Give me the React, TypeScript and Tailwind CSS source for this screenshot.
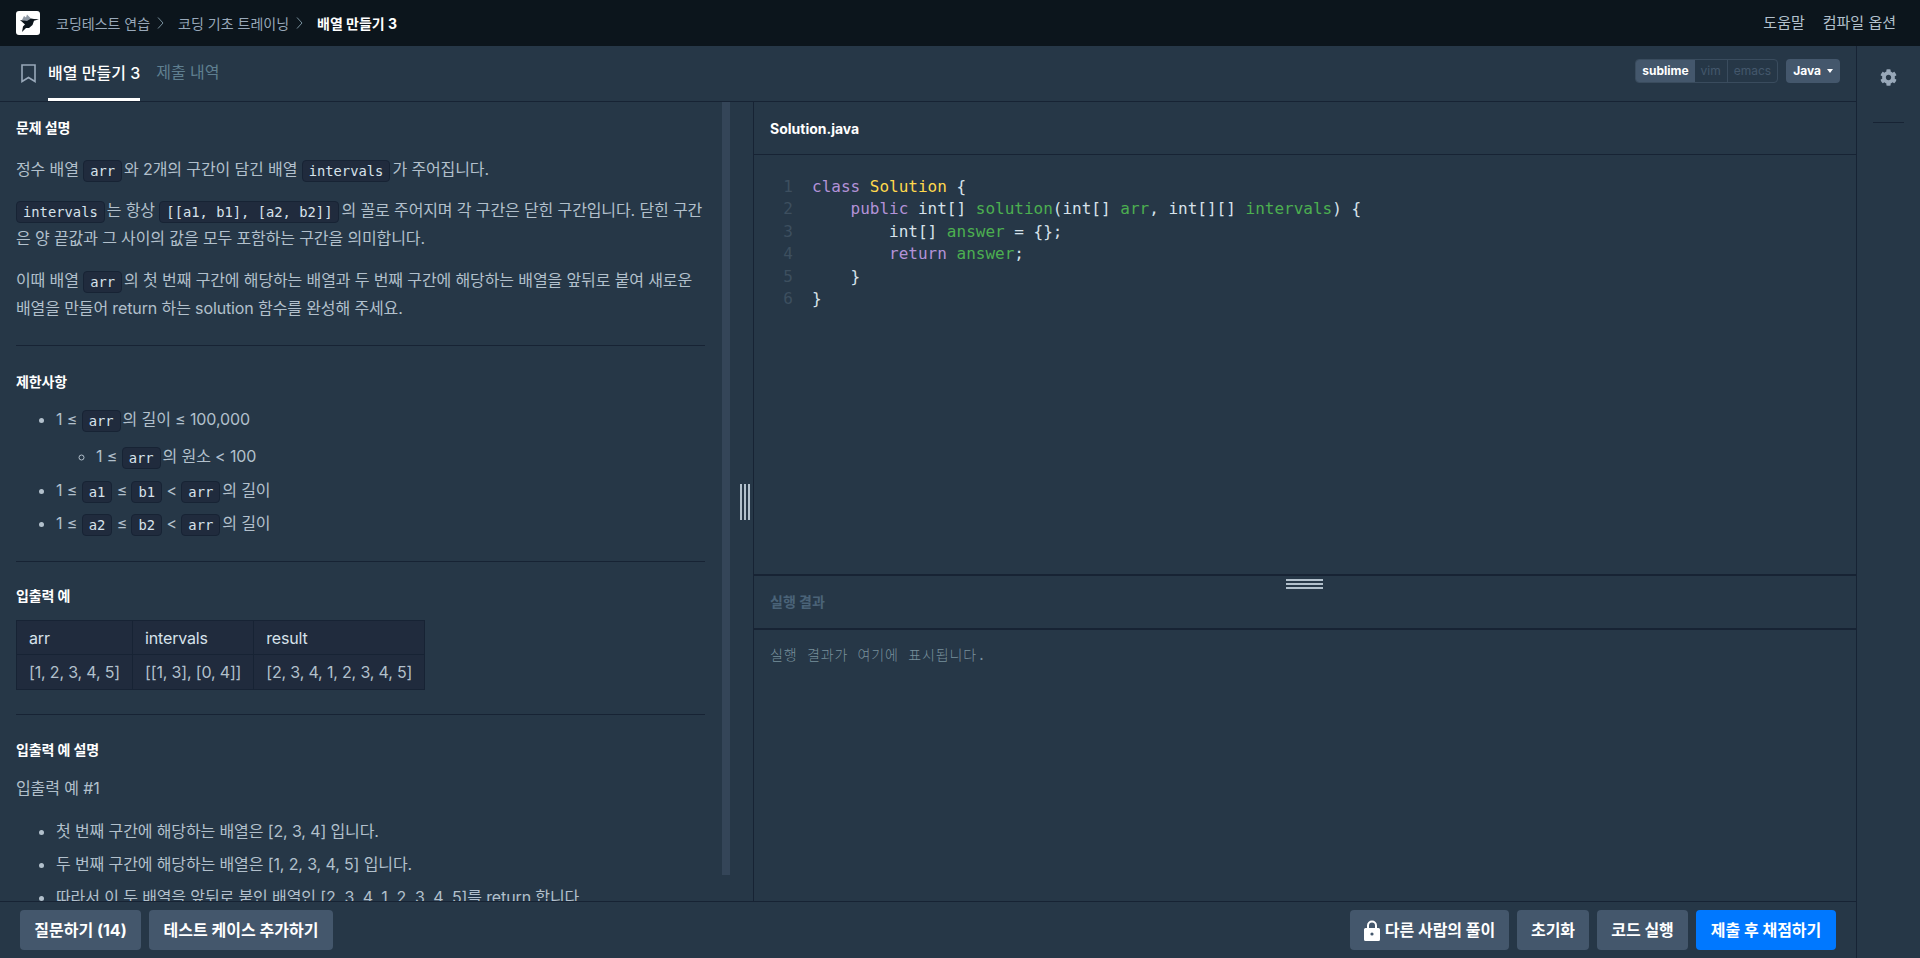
import type React from "react"
import { FaCog } from "react-icons/fa"

const Code: React.FC<{ children: React.ReactNode; tight?: boolean }> = ({ children, tight = true }) => (
  <code
    className={`inline-block h-[22px] rounded-[4px] border border-[#172334] bg-[#202b3d] px-[6px] align-[-1px] font-['DejaVu_Sans_Mono',monospace] text-[13.8px] leading-[20px] tracking-normal text-[#d7e2eb] ${
      tight ? "mr-[2px]" : ""
    }`}
  >
    {children}
  </code>
)

const Chevron = () => (
  <svg className="mr-[6px] ml-[7px] h-[12px] w-[7px]" viewBox="0 0 7 12" fill="none" stroke="#78909c" strokeWidth="1">
    <path d="M1 0.5 L6 6 L1 11.5" />
  </svg>
)

const Logo = () => (
  <div className="flex h-[24px] w-[24px] items-center justify-center rounded-[3px] bg-white">
    <svg className="h-[24px] w-[24px]" viewBox="0 0 24 24">
      <path d="M6 9 L8 5 L10 6.5 L11 3.5 L15 7.5 L14 10 L8 10 Z" fill="#8d97a3" />
      <path
        d="M4 9 L11 10 L15 7.5 L18 8 L23 8.2 L18 9.8 L16.5 14 L13 17 L10 17 L6 21 L7 15.5 L9 13.5 Z"
        fill="#0c151c"
      />
    </svg>
  </div>
)

const Lock = () => (
  <svg className="h-[21px] w-[16px]" viewBox="0 0 16 21">
    <path
      d="M3 8 V5.5 A5 5 0 0 1 13 5.5 V8 H14.5 A1.5 1.5 0 0 1 16 9.5 V19.5 A1.5 1.5 0 0 1 14.5 21 H1.5 A1.5 1.5 0 0 1 0 19.5 V9.5 A1.5 1.5 0 0 1 1.5 8 Z M5 8 H11 V5.5 A3 3 0 0 0 5 5.5 Z"
      fill="#ffffff"
      fillRule="evenodd"
    />
    <circle cx="8" cy="14" r="1.6" fill="#44576c" />
  </svg>
)

const SectionTitle: React.FC<{ children: React.ReactNode; className?: string }> = ({ children, className }) => (
  <h5 className={`text-[14px] leading-[20px] font-bold text-white ${className ?? ""}`}>{children}</h5>
)

const Divider: React.FC<{ className?: string }> = ({ className }) => (
  <hr className={`border-t border-[#172334] ${className ?? ""}`} />
)

const codeLines: React.ReactNode[] = [
  <>
    <span className="text-[#b392d8]">class</span> <span className="text-[#ffd94d]">Solution</span> {"{"}
  </>,
  <>
    {"    "}
    <span className="text-[#b392d8]">public</span> int[] <span className="text-[#4caf50]">solution</span>(int[]{" "}
    <span className="text-[#4caf50]">arr</span>, int[][] <span className="text-[#4caf50]">intervals</span>) {"{"}
  </>,
  <>
    {"        "}int[] <span className="text-[#4caf50]">answer</span> = {"{}"};
  </>,
  <>
    {"        "}
    <span className="text-[#b392d8]">return</span> <span className="text-[#4caf50]">answer</span>;
  </>,
  <>{"    }"}</>,
  <>{"}"}</>,
]

const Problem = () => (
  <div className="h-full overflow-hidden pt-[16px] pr-[35px] pb-[16px] pl-[16px] text-[16px] leading-[28px] tracking-[-0.12px] text-[#b2c0cc]">
    <SectionTitle className="mb-[17px]">문제 설명</SectionTitle>
    <p className="mb-[13px]">
      정수 배열 <Code>arr</Code>와 2개의 구간이 담긴 배열 <Code>intervals</Code>가 주어집니다.
    </p>
    <p className="mb-[14px]">
      <Code>intervals</Code>는 항상 <Code>[[a1, b1], [a2, b2]]</Code>의 꼴로 주어지며 각 구간은 닫힌 구간입니다. 닫힌 구간
      <br />은 양 끝값과 그 사이의 값을 모두 포함하는 구간을 의미합니다.
    </p>
    <p>
      이때 배열 <Code>arr</Code>의 첫 번째 구간에 해당하는 배열과 두 번째 구간에 해당하는 배열을 앞뒤로 붙여 새로운
      배열을 만들어 return 하는 solution 함수를 완성해 주세요.
    </p>
    <Divider className="mt-[23px] mb-[26px]" />
    <SectionTitle className="mb-[13px]">제한사항</SectionTitle>
    <ul className="list-disc pl-[40px]">
      <li className="mb-[6px]">
        1 ≤ <Code>arr</Code>의 길이 ≤ 100,000
        <ul className="mt-[9px] list-[circle] pl-[40px]">
          <li>
            1 ≤ <Code>arr</Code>의 원소 &lt; 100
          </li>
        </ul>
      </li>
      <li className="mb-[5px]">
        1 ≤ <Code tight={false}>a1</Code> ≤ <Code tight={false}>b1</Code> &lt; <Code>arr</Code>의 길이
      </li>
      <li>
        1 ≤ <Code tight={false}>a2</Code> ≤ <Code tight={false}>b2</Code> &lt; <Code>arr</Code>의 길이
      </li>
    </ul>
    <Divider className="mt-[24px] mb-[24px]" />
    <SectionTitle className="mb-[14px]">입출력 예</SectionTitle>
    <table className="border-collapse border border-[#172334] bg-[#202b3d] text-[16px] leading-[24px] tracking-[-0.16px]">
      <thead>
        <tr className="text-[#d7e2eb]">
          <th className="h-[34px] border border-[#172334] px-[12px] text-left font-normal">arr</th>
          <th className="border border-[#172334] px-[12px] text-left font-normal">intervals</th>
          <th className="border border-[#172334] px-[12px] text-left font-normal">result</th>
        </tr>
      </thead>
      <tbody>
        <tr>
          <td className="h-[35px] border border-[#172334] px-[12px]">[1, 2, 3, 4, 5]</td>
          <td className="border border-[#172334] px-[12px]">[[1, 3], [0, 4]]</td>
          <td className="border border-[#172334] px-[12px]">[2, 3, 4, 1, 2, 3, 4, 5]</td>
        </tr>
      </tbody>
    </table>
    <Divider className="mt-[24px] mb-[25px]" />
    <SectionTitle className="mb-[14px]">입출력 예 설명</SectionTitle>
    <p className="mb-[15px]">입출력 예 #1</p>
    <ul className="list-disc pl-[40px]">
      <li className="mb-[5px]">첫 번째 구간에 해당하는 배열은 [2, 3, 4] 입니다.</li>
      <li className="mb-[5px]">두 번째 구간에 해당하는 배열은 [1, 2, 3, 4, 5] 입니다.</li>
      <li>따라서 이 두 배열을 앞뒤로 붙인 배열인 [2, 3, 4, 1, 2, 3, 4, 5]를 return 합니다.</li>
    </ul>
  </div>
)

const Editor = () => (
  <div className="flex min-w-0 flex-1 flex-col">
    <div className="flex h-[53px] shrink-0 items-center border-b border-[#172334] pl-[16px] text-[14px] font-bold text-white">
      Solution.java
    </div>
    <div className="relative flex-1 pt-[21px] font-['DejaVu_Sans_Mono',monospace] text-[16px] leading-[22.4px]">
      {codeLines.map((line, i) => (
        <div key={i} className="flex whitespace-pre text-[#d7e2eb]">
          <span className="w-[39px] shrink-0 text-right text-[#3d4f5f]">{i + 1}</span>
          <span className="ml-[19px]">{line}</span>
        </div>
      ))}
    </div>
    <div className="relative flex h-[56px] shrink-0 items-center border-t-2 border-b-2 border-[#172334] pb-[2px] pl-[16px] text-[14px] font-bold text-[#4a6378]">
      실행 결과
      <div className="absolute top-[3px] left-[532px] flex w-[37px] flex-col gap-[2px]">
        <div className="h-[2px] bg-[#b2c0cc]" />
        <div className="h-[2px] bg-[#b2c0cc]" />
        <div className="h-[2px] bg-[#b2c0cc]" />
      </div>
    </div>
    <div className="h-[271px] shrink-0 pt-[14px] pl-[16px] font-['DejaVu_Sans_Mono','Noto_Sans_CJK_KR',monospace] text-[14px] leading-[22px] font-light tracking-[0.9px] text-[#78909c]">
      실행 결과가 여기에 표시됩니다.
    </div>
  </div>
)

export default function App() {
  return (
    <div className="flex h-screen flex-col overflow-hidden bg-[#263747] font-['Inter','Noto_Sans_CJK_KR',sans-serif]">
      <header className="flex h-[46px] shrink-0 items-center bg-[#0c151c] pr-[24px] pl-[16px] text-[14px] text-[#98a8b9]">
        <Logo />
        <span className="ml-[16px]">코딩테스트 연습</span>
        <Chevron />
        <span className="ml-[8px]">코딩 기초 트레이닝</span>
        <Chevron />
        <span className="ml-[8px] font-bold text-white">배열 만들기 3</span>
        <div className="ml-auto flex gap-[18px] text-[15px] text-[#b2c0cc]">
          <span>도움말</span>
          <span>컴파일 옵션</span>
        </div>
      </header>
      <div className="flex min-h-0 flex-1">
        <div className="flex min-w-0 flex-1 flex-col">
          <div className="flex h-[56px] shrink-0 items-stretch border-b border-[#172334] pr-[16px] pl-[21px]">
            <svg className="mt-[18px] h-[19px] w-[15px]" viewBox="0 0 15 19" fill="none" stroke="#98a8b9" strokeWidth="1.6">
              <path d="M1 1 H14 V17.5 L7.5 13.5 L1 17.5 Z" />
            </svg>
            <div className="ml-[12px] flex h-[55px] items-center border-b-[3px] border-white pt-[1px] text-[16px] font-medium text-white">
              배열 만들기 3
            </div>
            <div className="ml-[16px] flex h-[55px] items-center pb-[3px] text-[16px] text-[#5f7f90]">제출 내역</div>
            <div className="ml-auto flex items-start pt-[13px] pr-0 text-[12px]">
              <div className="flex h-[24px] items-stretch overflow-hidden rounded-[4px] border border-[#3a4c5e] leading-[22px]">
                <span className="bg-[#44576c] px-[6px] font-bold text-white">sublime</span>
                <span className="border-r border-[#3a4c5e] px-[6px] text-[#44576c]">vim</span>
                <span className="px-[6px] text-[#44576c]">emacs</span>
              </div>
              <div className="ml-[8px] flex h-[24px] items-center rounded-[4px] bg-[#44576c] px-[7px] font-bold text-white">
                Java
                <span className="ml-[6px] h-0 w-0 border-x-[3.5px] border-t-[4px] border-x-transparent border-t-white" />
              </div>
            </div>
          </div>
          <div className="flex min-h-0 flex-1">
            <div className="relative w-[740px] shrink-0">
              <Problem />
              <div className="absolute top-0 right-[10px] h-[773px] w-[8px] bg-[#344558]" />
            </div>
            <div className="flex w-[13px] shrink-0 items-center">
              <div className="flex h-[36px] gap-[2px]">
                <div className="w-[2px] bg-[#b2c0cc]" />
                <div className="w-[2px] bg-[#b2c0cc]" />
                <div className="w-[2px] bg-[#b2c0cc]" />
              </div>
            </div>
            <div className="flex min-w-0 flex-1 border-l border-[#172334]">
              <Editor />
            </div>
          </div>
          <div className="flex h-[57px] shrink-0 items-start border-t border-[#172334] pt-[8px] pr-[20px] pl-[20px] text-[16px] font-bold text-white">
            <button className="h-[40px] w-[121px] rounded-[4px] bg-[#44576c]">질문하기 (14)</button>
            <button className="ml-[8px] h-[40px] w-[184px] rounded-[4px] bg-[#44576c]">테스트 케이스 추가하기</button>
            <button className="ml-auto flex h-[40px] w-[159px] items-center justify-center gap-[5px] rounded-[4px] bg-[#44576c]">
              <Lock />
              다른 사람의 풀이
            </button>
            <button className="ml-[8px] h-[40px] w-[72px] rounded-[4px] bg-[#44576c]">초기화</button>
            <button className="ml-[8px] h-[40px] w-[91px] rounded-[4px] bg-[#44576c]">코드 실행</button>
            <button className="ml-[8px] h-[40px] w-[140px] rounded-[4px] bg-[#0078ff]">제출 후 채점하기</button>
          </div>
        </div>
        <aside className="flex w-[64px] shrink-0 flex-col items-center border-l border-[#172334]">
          <FaCog className="mt-[23px] text-[#98a8b9]" size={17} />
          <div className="mt-[36px] h-px w-[31px] bg-[#172334]" />
        </aside>
      </div>
    </div>
  )
}
